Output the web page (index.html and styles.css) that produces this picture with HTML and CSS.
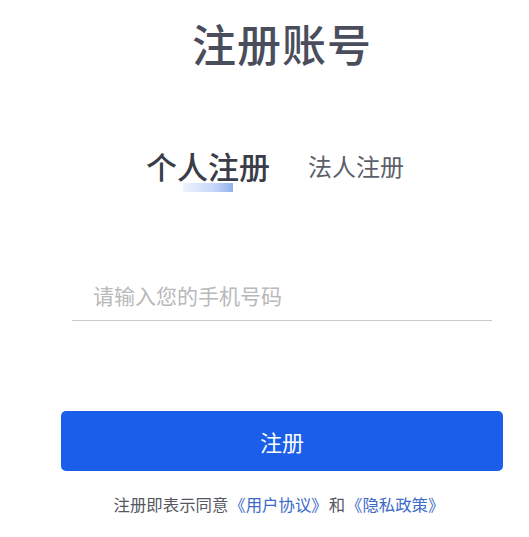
FILE: index.html
```html
<!DOCTYPE html>
<html lang="zh">
<head>
<meta charset="utf-8">
<link rel="stylesheet" href="styles.css">
</head>
<body>
<div class="page">
  <h1 class="title">注册账号</h1>
  <div class="tabs">
    <div class="tab active"><span class="tab-text">个人注册</span><span class="indicator"></span></div>
    <div class="tab">法人注册</div>
  </div>
  <div class="field">
    <span class="placeholder">请输入您的手机号码</span>
  </div>
  <button class="submit">注册</button>
  <p class="agree">注册即表示同意<a class="link">《用户协议》</a>和<a class="link">《隐私政策》</a></p>
</div>
</body>
</html>
```
FILE: styles.css
```css
html, body {
  margin: 0;
  padding: 0;
  background: #ffffff;
}
body {
  font-family: "Noto Sans CJK SC", "Noto Sans", sans-serif;
  width: 529px;
  height: 537px;
  overflow: hidden;
}
.page {
  width: 442px;
  margin-left: 61px;
  display: flex;
  flex-direction: column;
  align-items: center;
}
.title {
  margin: 17px 0 0 0;
  font-size: 44px;
  line-height: 52px;
  font-weight: 500;
  color: #4a4d5c;
  letter-spacing: 1px;
}
.tabs {
  margin-top: 77px;
  display: flex;
  align-items: center;
  gap: 38px;
  margin-left: -14px;
}
.tab {
  position: relative;
  font-size: 24px;
  line-height: 32px;
  color: #5c5f6b;
}
.tab.active {
  font-size: 31px;
  line-height: 40px;
  color: #3a3c47;
  font-weight: 500;
}
.tab-text {
  position: relative;
  z-index: 1;
}
.indicator {
  position: absolute;
  left: 37px;
  top: 37px;
  width: 50px;
  height: 9px;
  background: linear-gradient(90deg, #eef3fd 0%, #c9d8f8 60%, #8fb0f0 100%);
  z-index: 0;
}
.field {
  align-self: flex-start;
  margin-top: 94px;
  width: 420px;
  margin-left: 11px;
  border-bottom: 1px solid #c9c9c9;
  padding: 0 0 10px 21px;
  box-sizing: border-box;
}
.placeholder {
  font-size: 21px;
  line-height: 30px;
  color: #b9b9b9;
}
.submit {
  margin-top: 90px;
  width: 442px;
  height: 60px;
  border: none;
  border-radius: 5px;
  background: #1a5ee9;
  color: #ffffff;
  font-family: inherit;
  font-size: 22px;
  padding: 0;
}
.agree {
  margin: 22px 5px 0 0;
  font-size: 16.4px;
  line-height: 22px;
  color: #55575f;
}
.link {
  color: #3b6ac7;
  margin: 0 1px;
}
```
